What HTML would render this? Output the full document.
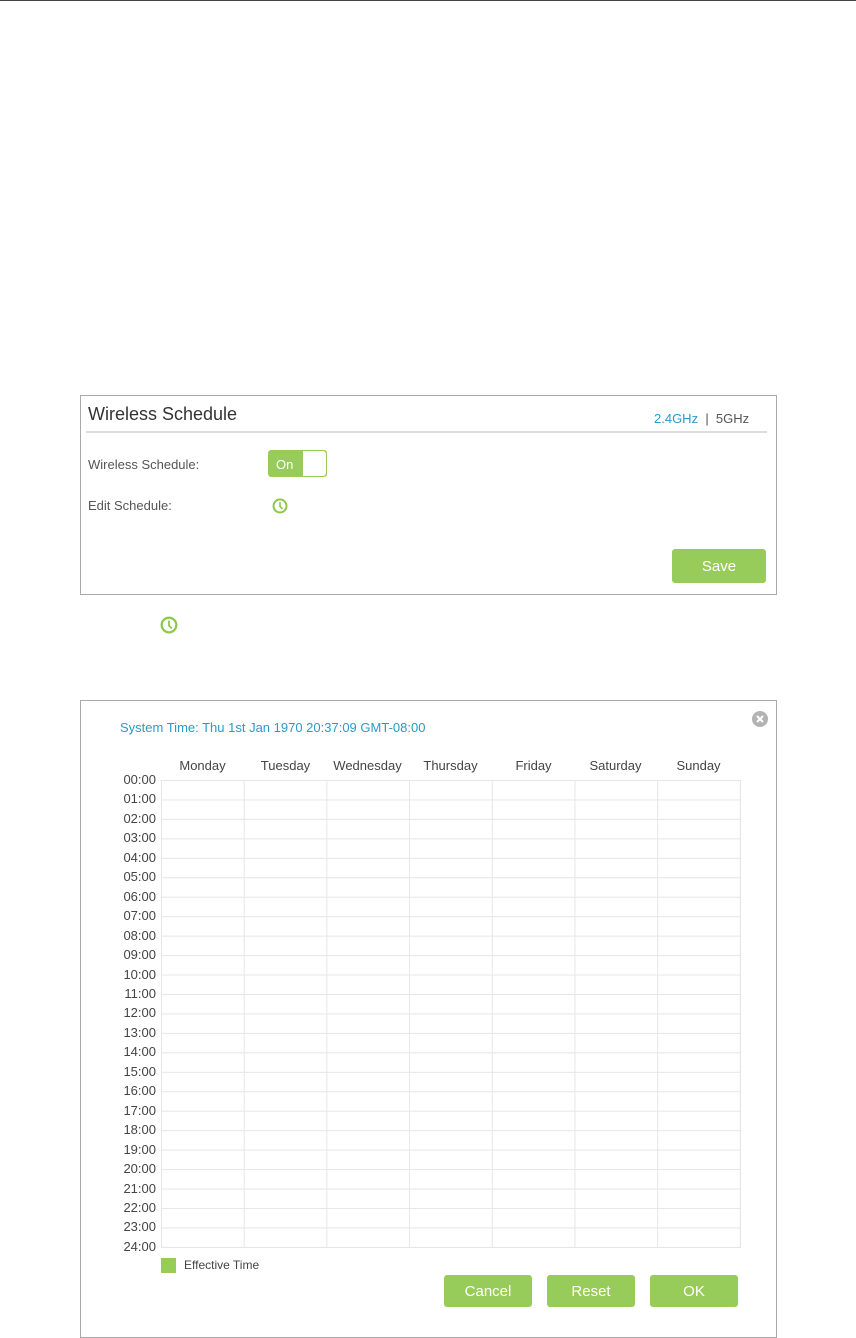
<!DOCTYPE html>
<html><head><meta charset="utf-8"><style>
*{margin:0;padding:0;box-sizing:border-box}
body{width:856px;height:1338px;background:#fff;position:relative;overflow:hidden;font-family:"Liberation Sans",sans-serif;color:#555}
.a{position:absolute}
.btn{position:absolute;background:#98cc5a;color:#fff;border-radius:3px;text-align:center;font-size:15px}
.lbl{position:absolute;left:100px;width:56px;text-align:right;font-size:13px;color:#444;line-height:14px}
.day{position:absolute;top:758px;width:83px;text-align:center;font-size:13px;color:#444}
</style></head><body>
<div class="a" style="left:0;top:0;width:856px;height:1px;background:#444"></div>

<div class="a" style="left:80px;top:395px;width:697px;height:200px;border:1px solid #aaa"></div>
<div class="a" style="left:88px;top:404px;font-size:18px;color:#333">Wireless Schedule</div>
<div class="a" style="left:654px;top:411px;font-size:13px"><span style="color:#2a9ac9">2.4GHz</span> <span style="color:#555">&nbsp;|&nbsp; 5GHz</span></div>
<div class="a" style="left:86px;top:431px;width:681px;height:2px;background:#ddd"></div>
<div class="a" style="left:88px;top:457px;font-size:13px">Wireless Schedule:</div>
<div class="a" style="left:268px;top:450px;width:59px;height:27px;background:#98cc5a;border-radius:3px;border:1px solid #98cc5a"></div>
<div class="a" style="left:303px;top:451px;width:23px;height:25px;background:#fff;border-radius:0 3px 3px 0"></div>
<div class="a" style="left:276px;top:457px;font-size:13px;color:#fff">On</div>
<div class="a" style="left:88px;top:498px;font-size:13px">Edit Schedule:</div>
<svg class="a" style="left:272px;top:498px" width="16" height="16" viewBox="0 0 16 16"><circle cx="8" cy="8" r="6.5" fill="none" stroke="#8cc84b" stroke-width="2"/><path d="M8 4V8.5L10.5 11" fill="none" stroke="#8cc84b" stroke-width="1.6"/></svg>
<div class="btn" style="left:672px;top:549px;width:94px;height:34px;line-height:36px">Save</div>

<svg class="a" style="left:160px;top:616px" width="18" height="18" viewBox="0 0 16 16"><circle cx="8" cy="8" r="6.5" fill="none" stroke="#8cc84b" stroke-width="2"/><path d="M8 4V8.5L10.5 11" fill="none" stroke="#8cc84b" stroke-width="1.6"/></svg>

<div class="a" style="left:80px;top:700px;width:697px;height:638px;border:1px solid #aaa"></div>
<svg class="a" style="left:752px;top:711px" width="16" height="16" viewBox="0 0 16 16"><circle cx="8" cy="8" r="8" fill="#b3b3b3"/><path d="M5 5L11 11M11 5L5 11" stroke="#fff" stroke-width="2.2"/></svg>
<div class="a" style="left:120px;top:720px;font-size:13px;color:#2a9ac9">System Time: Thu 1st Jan 1970 20:37:09 GMT-08:00</div>

<div class="day" style="left:161px">Monday</div>
<div class="day" style="left:244px">Tuesday</div>
<div class="day" style="left:326px">Wednesday</div>
<div class="day" style="left:409px">Thursday</div>
<div class="day" style="left:492px">Friday</div>
<div class="day" style="left:574px">Saturday</div>
<div class="day" style="left:657px">Sunday</div>

<div class="a" style="left:161px;top:780px;width:580px;height:468px;border:1px solid #e6e6e6;
background-image:linear-gradient(to bottom,#e6e6e6 1px,transparent 1px),linear-gradient(to right,#e6e6e6 1px,transparent 1px);
background-size:100% 19.458px,82.7px 100%;background-position:-1px -1px"></div>

<div class="lbl" style="top:773px">00:00</div>
<div class="lbl" style="top:792px">01:00</div>
<div class="lbl" style="top:812px">02:00</div>
<div class="lbl" style="top:831px">03:00</div>
<div class="lbl" style="top:851px">04:00</div>
<div class="lbl" style="top:870px">05:00</div>
<div class="lbl" style="top:890px">06:00</div>
<div class="lbl" style="top:909px">07:00</div>
<div class="lbl" style="top:929px">08:00</div>
<div class="lbl" style="top:948px">09:00</div>
<div class="lbl" style="top:968px">10:00</div>
<div class="lbl" style="top:987px">11:00</div>
<div class="lbl" style="top:1006px">12:00</div>
<div class="lbl" style="top:1026px">13:00</div>
<div class="lbl" style="top:1045px">14:00</div>
<div class="lbl" style="top:1065px">15:00</div>
<div class="lbl" style="top:1084px">16:00</div>
<div class="lbl" style="top:1104px">17:00</div>
<div class="lbl" style="top:1123px">18:00</div>
<div class="lbl" style="top:1143px">19:00</div>
<div class="lbl" style="top:1162px">20:00</div>
<div class="lbl" style="top:1182px">21:00</div>
<div class="lbl" style="top:1201px">22:00</div>
<div class="lbl" style="top:1220px">23:00</div>
<div class="lbl" style="top:1240px">24:00</div>

<div class="a" style="left:161px;top:1258px;width:15px;height:15px;background:#98cc5a"></div>
<div class="a" style="left:184px;top:1258px;font-size:12px;color:#444">Effective Time</div>

<div class="btn" style="left:444px;top:1275px;width:88px;height:32px;line-height:34px">Cancel</div>
<div class="btn" style="left:547px;top:1275px;width:88px;height:32px;line-height:34px">Reset</div>
<div class="btn" style="left:650px;top:1275px;width:88px;height:32px;line-height:34px">OK</div>
</body></html>
